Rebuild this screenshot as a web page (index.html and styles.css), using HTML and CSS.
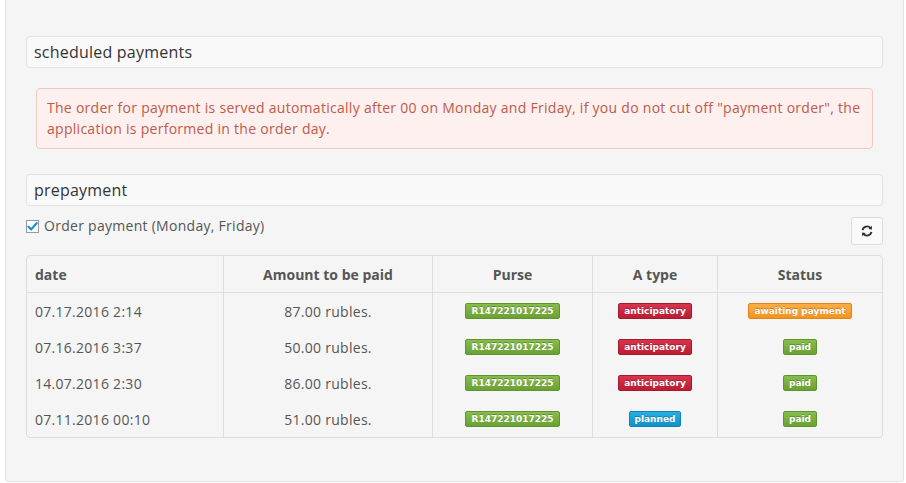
FILE: index.html
```html
<!DOCTYPE html>
<html>
<head>
<meta charset="utf-8">
<link rel="stylesheet" href="styles.css">
</head>
<body>
<div class="panel">
  <div class="section-title">scheduled payments</div>
  <div class="alert">The order for payment is served automatically after 00 on Monday and Friday, if you do not cut off "payment order", the application is performed in the order day.</div>
  <div class="section-title prepay">prepayment</div>
  <div class="toolbar">
    <label class="check">
      <span class="box"><svg width="11" height="11" viewBox="0 0 11 11"><path d="M1.5 5.8 L4.2 8.4 L9.6 2.2" fill="none" stroke="#1a8ed6" stroke-width="2.2" stroke-linecap="round" stroke-linejoin="round"/></svg></span>
      Order payment (Monday, Friday)
    </label>
    <button class="refresh"><svg width="12" height="12" viewBox="0 0 12 12"><path d="M1.6 5.2 A4.5 4.5 0 0 1 9.6 3.2" fill="none" stroke="#333" stroke-width="1.9"/><path d="M7.4 3.9 L11 4.4 L10.8 0.8 Z" fill="#333"/><path d="M10.4 6.8 A4.5 4.5 0 0 1 2.4 8.8" fill="none" stroke="#333" stroke-width="1.9"/><path d="M4.6 8.1 L1 7.6 L1.2 11.2 Z" fill="#333"/></svg></button>
  </div>
  <div class="table">
    <div class="row head">
      <div class="c c1">date</div><div class="c c2">Amount to be paid</div><div class="c c3">Purse</div><div class="c c4">A type</div><div class="c c5">Status</div>
    </div>
    <div class="row">
      <div class="c c1">07.17.2016 2:14</div><div class="c c2">87.00 rubles.</div><div class="c c3"><span class="badge green">R147221017225</span></div><div class="c c4"><span class="badge red">anticipatory</span></div><div class="c c5"><span class="badge orange">awaiting payment</span></div>
    </div>
    <div class="row">
      <div class="c c1">07.16.2016 3:37</div><div class="c c2">50.00 rubles.</div><div class="c c3"><span class="badge green">R147221017225</span></div><div class="c c4"><span class="badge red">anticipatory</span></div><div class="c c5"><span class="badge green">paid</span></div>
    </div>
    <div class="row">
      <div class="c c1">14.07.2016 2:30</div><div class="c c2">86.00 rubles.</div><div class="c c3"><span class="badge green">R147221017225</span></div><div class="c c4"><span class="badge red">anticipatory</span></div><div class="c c5"><span class="badge green">paid</span></div>
    </div>
    <div class="row">
      <div class="c c1">07.11.2016 00:10</div><div class="c c2">51.00 rubles.</div><div class="c c3"><span class="badge green">R147221017225</span></div><div class="c c4"><span class="badge blue">planned</span></div><div class="c c5"><span class="badge green">paid</span></div>
    </div>
  </div>
</div>
</body>
</html>
```
FILE: styles.css
```css
html, body { margin: 0; padding: 0; background: #fff; }
body { font-family: "Open Sans", "DejaVu Sans", sans-serif; font-size: 14px; color: #555; letter-spacing: 0.28px; }
.panel {
  margin-left: 5px;
  width: 857px;
  height: 445px;
  padding: 36px 20px 0 20px;
  background: #f5f5f5;
  border: 1px solid #e3e3e3;
  border-top: none;
  border-radius: 0 0 4px 4px;
}
.section-title {
  height: 30px;
  line-height: 30px;
  padding: 0 7px;
  font-size: 16px;
  letter-spacing: 0.22px;
  color: #333;
  background: #f9f9f9;
  border: 1px solid #e1e1e1;
  border-radius: 4px;
}
.alert {
  margin: 20px 10px 0 10px;
  padding: 8px 10px 9px 10px;
  line-height: 21px;
  color: #c05a4a;
  background: #fdf0ee;
  border: 1px solid #efc8c6;
  border-radius: 4px;
}
.prepay { margin-top: 25px; }
.toolbar {
  display: flex;
  justify-content: space-between;
  align-items: flex-start;
  margin-top: 10px;
}
.check { display: flex; align-items: center; gap: 5px; line-height: 20px; color: #555; }
.box {
  width: 11px; height: 11px;
  border: 1px solid #9a9a9a;
  background: #fff;
  display: flex; align-items: center; justify-content: center;
}
.refresh {
  width: 32px; height: 28px;
  margin-top: 1px;
  padding: 0;
  background: #fafafa;
  border: 1px solid #dcdcdc;
  border-radius: 3px;
  display: flex; align-items: center; justify-content: center;
}
.table {
  margin-top: 10px;
  border: 1px solid #dddddd;
  border-radius: 4px;
}
.row { display: flex; height: 36px; }
.row.head { height: 36px; border-bottom: 1px solid #dddddd; font-weight: bold; color: #555; letter-spacing: 0; }
.c {
  display: flex; align-items: center; justify-content: center;
  border-left: 1px solid #dddddd;
  box-sizing: border-box;
}
.c1 { width: 196px; border-left: none; justify-content: flex-start; padding-left: 8px; }
.c2 { width: 209px; }
.c3 { width: 160px; }
.c4 { width: 125px; }
.c5 { flex: 1; }
.badge {
  font-family: "DejaVu Sans", Verdana, sans-serif;
  font-weight: bold;
  font-size: 9px;
  letter-spacing: 0;
  color: #fff;
  line-height: 14px;
  padding: 0 5px;
  border-radius: 2px;
  text-shadow: 0 -1px 0 rgba(0,0,0,0.25);
}
.green { background: linear-gradient(#86bd4c, #6ba133); border: 1px solid #5f9430; }
.red { background: linear-gradient(#d7354d, #bb1d35); border: 1px solid #a8182d; }
.orange { background: linear-gradient(#fbad45, #f39320); border: 1px solid #e0861b; }
.blue { background: linear-gradient(#26aee3, #1491c9); border: 1px solid #1082b5; }
```
